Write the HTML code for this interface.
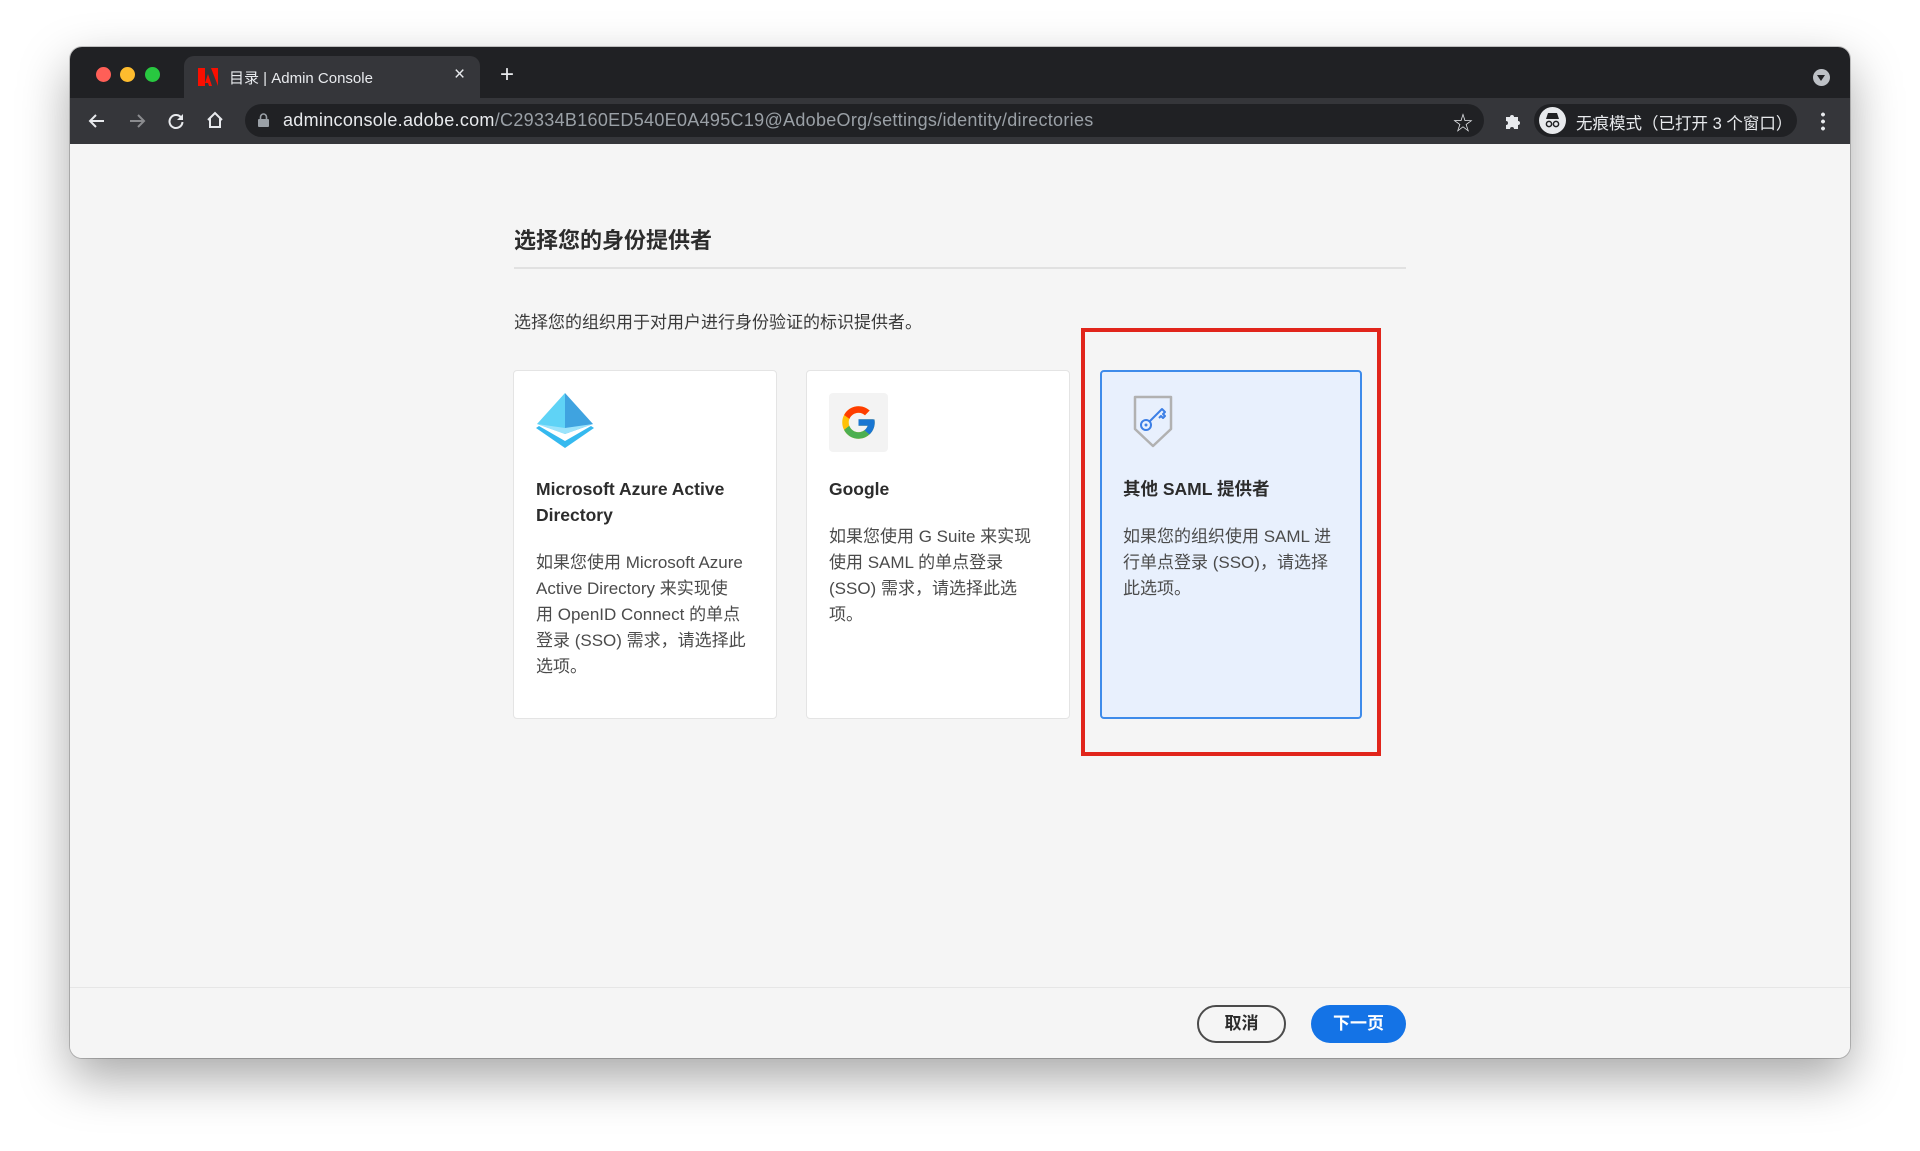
<!DOCTYPE html>
<html><head><meta charset="utf-8"><style>
*{margin:0;padding:0;box-sizing:border-box}
body{width:1920px;height:1151px;background:#fff;font-family:"Liberation Sans","Noto Sans CJK SC",sans-serif;position:relative;overflow:hidden}
.win{position:absolute;left:70px;top:47px;width:1780px;height:1011px;border-radius:12px;overflow:hidden;box-shadow:0 20px 50px rgba(0,0,0,.35),0 0 0 1px rgba(0,0,0,.2);background:#f5f5f5}
.tabbar{position:absolute;left:0;top:0;width:100%;height:51px;background:#202124}
.toolbar{position:absolute;left:0;top:51px;width:100%;height:46px;background:#35363a}
.dot{position:absolute;top:20px;width:15px;height:15px;border-radius:50%}
.tab{position:absolute;left:114px;top:9px;width:296px;height:42px;background:#35363a;border-radius:10px 10px 0 0}
.abs{position:absolute}
.content{position:absolute;left:0;top:97px;width:100%;height:914px;background:#f5f5f5}
.card{position:absolute;top:226px;height:349px;background:#fff;border:1px solid #e4e4e4;border-radius:4px;padding:0 22px}
.card h3{position:absolute;left:22px;top:105px;font-size:17.5px;line-height:26px;color:#2c2c2c;font-weight:bold;width:230px;white-space:nowrap}
.card p{position:absolute;left:22px;font-size:17px;line-height:26px;color:#4b4b4b;width:240px;white-space:nowrap}
.btn{position:absolute;top:861px;height:38px;border-radius:19px;font-size:17px;font-weight:bold;text-align:center;line-height:34px}
</style></head><body>
<div class="win">
 <div class="tabbar">
  <div class="dot" style="left:26px;background:#ff5f57"></div>
  <div class="dot" style="left:50px;background:#febc2e"></div>
  <div class="dot" style="left:75px;background:#28c840"></div>
  <div class="tab">
   <svg class="abs" style="left:14px;top:12px" width="20" height="18" viewBox="0 0 20 18"><path d="M0 0h7v18H0z M13 0h7v18z" fill="#fa0f00"/><path d="M10 6l4 12h-3l-1-3h-3z" fill="#fa0f00"/></svg>
   <div class="abs" style="left:45px;top:11px;color:#e8eaed;font-size:15px">目录 | Admin Console</div>
   <div class="abs" style="left:270px;top:8px;color:#e8eaed;font-size:19px">×</div>
  </div>
  <div class="abs" style="left:430px;top:14px;color:#e8eaed;font-size:24px;font-weight:300">+</div>
  <div class="abs" style="left:1743px;top:22px;width:17px;height:17px;border-radius:50%;background:#bdc1c6"><div style="position:absolute;left:4px;top:6px;border-left:4.5px solid transparent;border-right:4.5px solid transparent;border-top:6px solid #202124"></div></div>
 </div>
 <div class="toolbar">
  <svg class="abs" style="left:17px;top:13px" width="20" height="20" viewBox="0 0 20 20"><path d="M17 10H4M9 4l-6 6 6 6" stroke="#e8eaed" stroke-width="2" fill="none"/></svg>
  <svg class="abs" style="left:57px;top:13px" width="20" height="20" viewBox="0 0 20 20"><path d="M3 10h13M11 4l6 6-6 6" stroke="#8a8b8e" stroke-width="2" fill="none"/></svg>
  <svg class="abs" style="left:96px;top:13px" width="20" height="20" viewBox="0 0 20 20"><path d="M15.5 7A6.5 6.5 0 1 0 16.5 11" stroke="#e8eaed" stroke-width="2" fill="none"/><path d="M17 3v6h-6z" fill="#e8eaed"/></svg>
  <svg class="abs" style="left:135px;top:12px" width="20" height="20" viewBox="0 0 20 20"><path d="M3 10L10 3l7 7M5 8.5V17h10V8.5" stroke="#e8eaed" stroke-width="2" fill="none"/></svg>
  <div class="abs" style="left:175px;top:6px;width:1239px;height:33px;border-radius:17px;background:#202124">
   <svg class="abs" style="left:13px;top:9px" width="11" height="14" viewBox="0 0 11 14"><rect x="0" y="6" width="11" height="8" rx="1" fill="#9aa0a6"/><path d="M2.5 6V4a3 3 0 0 1 6 0v2" stroke="#9aa0a6" stroke-width="1.6" fill="none"/></svg>
   <div class="abs" style="left:38px;top:6px;font-size:18px;color:#e8eaed;white-space:nowrap;letter-spacing:.3px">adminconsole.adobe.com<span style="color:#9aa0a6">/C29334B160ED540E0A495C19@AdobeOrg/settings/identity/directories</span></div>
   <div class="abs" style="left:1208px;top:3px;color:#e8eaed;font-size:20px">☆</div>
  </div>
  <svg class="abs" style="left:1433px;top:13px" width="20" height="20" viewBox="0 0 20 20"><path d="M3 6h4a2 2 0 1 1 4 0h4v4a2 2 0 1 1 0 4v4h-4a2 2 0 1 0-4 0H3v-4a2 2 0 1 0 0-4z" fill="#e8eaed"/></svg>
  <div class="abs" style="left:1464px;top:6px;width:263px;height:33px;border-radius:17px;background:#202124">
   <div class="abs" style="left:5px;top:3px;width:27px;height:27px;border-radius:50%;background:#e8eaed"><svg width="27" height="27" viewBox="0 0 27 27"><path d="M7 12h13l-2-6h-9z" fill="#202124"/><circle cx="10" cy="17" r="2.6" stroke="#202124" stroke-width="1.5" fill="none"/><circle cx="17" cy="17" r="2.6" stroke="#202124" stroke-width="1.5" fill="none"/></svg></div>
   <div class="abs" style="left:42px;top:6px;color:#e8eaed;font-size:16.5px;white-space:nowrap">无痕模式（已打开 3 个窗口）</div>
  </div>
  <div class="abs" style="left:1751px;top:13px;width:4px;height:20px;background:radial-gradient(circle,#e8eaed 1.8px,transparent 2px) 0 0/4px 7px"></div>
 </div>
 <div class="content">
  <div class="abs" style="left:444px;top:79px;font-size:22px;font-weight:bold;color:#2c2c2c">选择您的身份提供者</div>
  <div class="abs" style="left:444px;top:123px;width:892px;height:2px;background:#e1e1e1"></div>
  <div class="abs" style="left:444px;top:164px;font-size:17px;color:#3a3a3a">选择您的组织用于对用户进行身份验证的标识提供者。</div>
  <div class="card" style="left:443px;width:264px">
   <svg class="abs" style="left:21px;top:20px" width="62" height="58" viewBox="0 0 62 58"><path d="M30 2L2 33l28 10z" fill="#5fd3f6"/><path d="M30 2l28 31-28 10z" fill="#3fa3e0"/><path d="M2 33l28 10 28-10-28 4z" fill="#9be3fb"/><path d="M1 37l29 20 29-20-3-2-26 15-26-15z" fill="#35b9ef"/></svg>
   <h3>Microsoft Azure Active<br>Directory</h3>
   <p style="top:179px">如果您使用 Microsoft Azure<br>Active Directory 来实现使<br>用 OpenID Connect 的单点<br>登录 (SSO) 需求，请选择此<br>选项。</p>
  </div>
  <div class="card" style="left:736px;width:264px">
   <div class="abs" style="left:22px;top:22px;width:59px;height:59px;background:#f3f3f3;border-radius:4px">
    <svg class="abs" style="left:10px;top:10px" width="39" height="39" viewBox="0 0 48 48"><path d="M43.6 20.1H42V20H24v8h11.3C33.7 32.7 29.2 36 24 36c-6.6 0-12-5.4-12-12s5.4-12 12-12c3.1 0 5.8 1.2 8 3l5.7-5.7C34 6.1 29.3 4 24 4 13 4 4 13 4 24s9 20 20 20 20-9 20-20c0-1.3-.1-2.6-.4-3.9z" fill="#FFC107"/><path d="M6.3 14.7l6.6 4.8C14.7 15.1 19 12 24 12c3.1 0 5.8 1.2 8 3l5.7-5.7C34 6.1 29.3 4 24 4 16.3 4 9.7 8.3 6.3 14.7z" fill="#FF3D00"/><path d="M24 44c5.2 0 9.9-2 13.4-5.2l-6.2-5.2C29.2 35.1 26.7 36 24 36c-5.2 0-9.6-3.3-11.3-8l-6.5 5C9.5 39.6 16.2 44 24 44z" fill="#4CAF50"/><path d="M43.6 20.1H42V20H24v8h11.3c-.8 2.2-2.2 4.2-4.1 5.6l6.2 5.2C37 39.2 44 34 44 24c0-1.3-.1-2.6-.4-3.9z" fill="#1976D2"/></svg>
   </div>
   <h3>Google</h3>
   <p style="top:153px">如果您使用 G Suite 来实现<br>使用 SAML 的单点登录<br>(SSO) 需求，请选择此选<br>项。</p>
  </div>
  <div class="card" style="left:1030px;width:262px;background:#e8f0fd;border:2px solid #3e8bea">
   <svg class="abs" style="left:30px;top:22px" width="42" height="54" viewBox="0 0 42 54"><path d="M3 3h36v32L21 52 3 35z" stroke="#b1b1b1" stroke-width="2.5" fill="none" stroke-linejoin="round"/><circle cx="14" cy="31" r="5" stroke="#3c7fe6" stroke-width="2" fill="none"/><circle cx="14" cy="31" r="1.5" fill="#3c7fe6"/><path d="M18 27l12-12 3 3-2 2 2 2-2 2-2-2-2 2" stroke="#3c7fe6" stroke-width="2" fill="none" stroke-linejoin="round"/></svg>
   <h3 style="left:21px;top:104px">其他 SAML 提供者</h3>
   <p style="left:21px;top:152px">如果您的组织使用 SAML 进<br>行单点登录 (SSO)，请选择<br>此选项。</p>
  </div>
  <div class="abs" style="left:1011px;top:184px;width:300px;height:428px;border:4px solid #e1251b"></div>
  <div class="abs" style="left:0;top:843px;width:100%;height:1px;background:#e6e6e6"></div>
  <div class="btn" style="left:1127px;width:89px;border:2.5px solid #4b4b4b;color:#2c2c2c">取消</div>
  <div class="btn" style="left:1241px;width:95px;background:#1473e6;color:#fff;line-height:38px">下一页</div>
 </div>
</div>
</body></html>
